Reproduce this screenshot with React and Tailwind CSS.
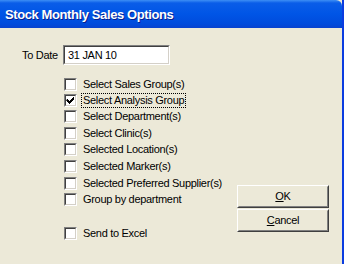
import React from "react";

const items = [
  { label: "Select Sales Group(s)", h: "h-[16px]" },
  { label: "Select Analysis Group", h: "h-[16px]", checked: true, focus: true },
  { label: "Select Department(s)", h: "h-[17px]" },
  { label: "Select Clinic(s)", h: "h-[16px]" },
  { label: "Selected Location(s)", h: "h-[17px]" },
  { label: "Selected Marker(s)", h: "h-[17px]" },
  { label: "Selected Preferred Supplier(s)", h: "h-[16px]" },
  { label: "Group by department", h: "h-[16px]" },
];

function Box({ checked }) {
  return (
    <div className="w-[13px] h-[13px] shrink-0 border border-t-[#808080] border-l-[#808080] border-b-white border-r-white">
      <div className="w-full h-full border border-t-[#404040] border-l-[#404040] border-b-[#D4D0C8] border-r-[#D4D0C8] bg-white relative">
        {checked && (
          <svg width="9" height="9" viewBox="0 0 9 9" className="absolute left-0 top-0">
            <path d="M1 3h1v1h1v1h1v-1h1v-1h1v-1h1v-1h1v3h-1v1h-1v1h-1v1h-1v1h-1v-1h-1v-1h-1v-1h-1z" fill="#000" />
          </svg>
        )}
      </div>
    </div>
  );
}

function Check({ label, h, checked, focus }) {
  return (
    <div className={`flex items-start ${h}`}>
      <Box checked={checked} />
      <span
        className={`ml-[5px] leading-[13px] px-[1px] ${
          focus ? "outline outline-1 outline-dotted outline-black" : ""
        }`}
      >
        {label}
      </span>
    </div>
  );
}

function Button({ children }) {
  return (
    <div className="w-[92px] h-[23px] border border-t-white border-l-white border-b-[#404040] border-r-[#404040]">
      <div className="w-full h-full border border-t-[#ECE9D8] border-l-[#ECE9D8] border-b-[#808080] border-r-[#808080] flex items-center justify-center">
        {children}
      </div>
    </div>
  );
}

export default function App() {
  return (
    <div
      className="w-[344px] h-[264px] flex flex-col bg-[#ECE9D8] border-r-[2px] border-[#0B3CE0] overflow-hidden text-[11px] tracking-[-0.3px] text-black"
      style={{ fontFamily: '"Liberation Sans", Arial, sans-serif' }}
    >
      <div className="h-[28px] shrink-0 bg-[linear-gradient(to_bottom,#3D8FF5_0px,#0A5DE8_3px,#0055E6_14px,#004BDC_24px,#0842CF_28px)] flex items-center pl-[5px] rounded-tr-[6px]">
        <span
          className="text-white font-bold text-[13px] tracking-[-0.4px] leading-none [text-shadow:1px_1px_0_#0A1E8C]"
          style={{ fontFamily: '"Liberation Sans", Arial, sans-serif' }}
        >
          Stock Monthly Sales Options
        </span>
      </div>
      <div className="flex flex-1">
        <div className="w-[237px] flex flex-col">
          <div className="flex items-center mt-[17px] h-[20px]">
            <span className="ml-[22px] w-[41px]">To Date</span>
            <div className="w-[107px] h-[20px] border border-t-[#808080] border-l-[#808080] border-b-white border-r-white">
              <div className="w-full h-full border border-t-[#404040] border-l-[#404040] border-b-[#D4D0C8] border-r-[#D4D0C8] bg-white flex items-center pl-[3px]">
                31 JAN 10
              </div>
            </div>
          </div>
          <div className="flex flex-col ml-[64px] mt-[13px]">
            {items.map((it) => (
              <Check key={it.label} {...it} />
            ))}
            <div className="mt-[18px]">
              <Check label="Send to Excel" h="h-[16px]" />
            </div>
          </div>
        </div>
        <div className="flex flex-col gap-[1px] mt-[157px]">
          <Button>
            <span>
              <span className="underline">O</span>K
            </span>
          </Button>
          <Button>
            <span>
              <span className="underline">C</span>ancel
            </span>
          </Button>
        </div>
      </div>
    </div>
  );
}
